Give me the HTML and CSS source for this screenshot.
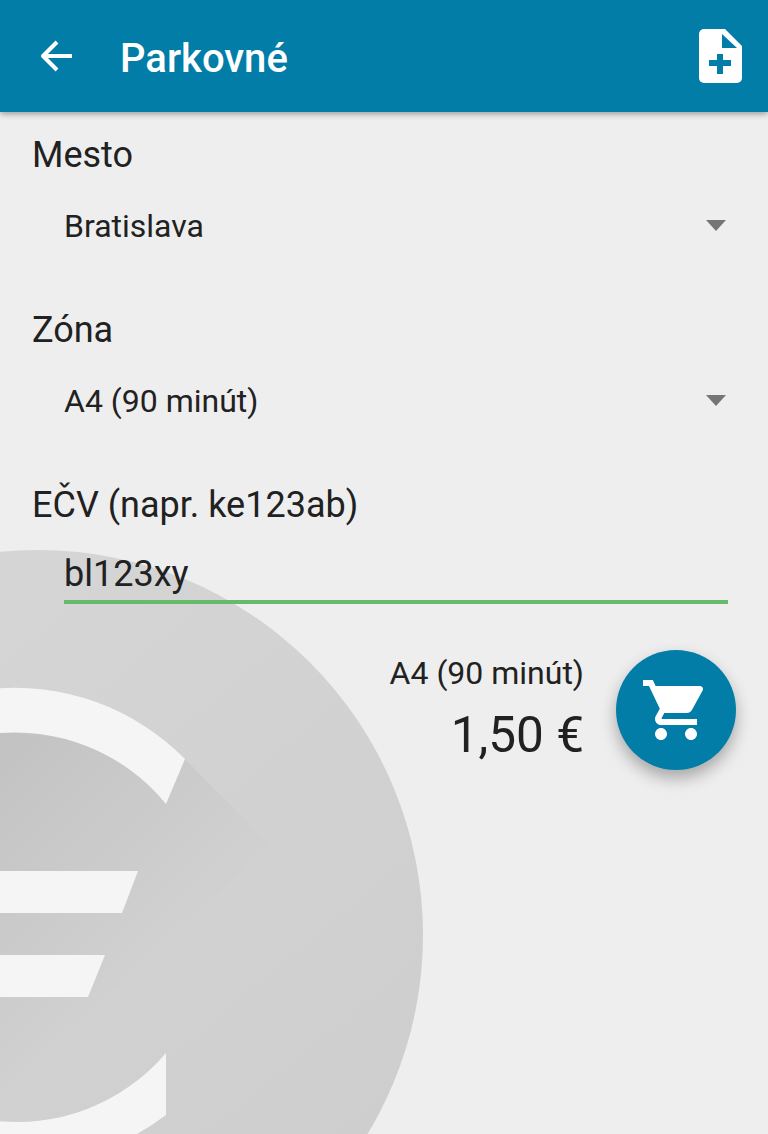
FILE: index.html
```html
<!DOCTYPE html>
<html>

<head>
	<meta charset="utf-8" />
	<title>Parkovné</title>
	<link rel="stylesheet" href="styles.css">
</head>

<body>
	<!-- euro watermark behind the form -->
	<svg class="watermark" width="768" height="1134" viewBox="0 0 768 1134">
		<defs>
			<linearGradient id="discFill" gradientUnits="userSpaceOnUse" x1="0" y1="600" x2="420" y2="1100">
				<stop offset="0" stop-color="#d5d5d5" />
				<stop offset="1" stop-color="#cecece" />
			</linearGradient>
			<linearGradient id="shadeFill" gradientUnits="userSpaceOnUse" x1="0" y1="730" x2="182" y2="912">
				<stop offset="0" stop-color="#c2c2c2" />
				<stop offset="1" stop-color="#d0d0d0" />
			</linearGradient>
			<clipPath id="discClip">
				<circle cx="38" cy="935" r="385" />
			</clipPath>
		</defs>
		<circle cx="38" cy="935" r="385" fill="url(#discFill)" />
		<polygon points="-10,710 90,720 175,770 185,759 270,845 -10,1105" fill="url(#shadeFill)" clip-path="url(#discClip)" />
		<path d="M-10 689 A240 240 0 0 1 185 759 L166 804 A195 195 0 0 0 -10 734 Z" fill="#f5f5f5" />
		<path d="M-10 871 H138 L122 913 H-10 Z" fill="#f5f5f5" />
		<path d="M-10 955 H105 L88 997 H-10 Z" fill="#f5f5f5" />
		<path d="M-10 1120 A195 195 0 0 0 166 1053 V1115 A240 240 0 0 1 137 1134 H-10 Z" fill="#f5f5f5" />
	</svg>

	<header class="toolbar">
		<button class="icon-btn back" type="button" aria-label="Späť">
			<svg width="36" height="36" viewBox="0 0 36 36">
				<path d="M33 18H4 M18 4 L4 18 L18 32" fill="none" stroke="#fff" stroke-width="4" stroke-linejoin="round" />
			</svg>
		</button>
		<h1 class="title">Parkovné</h1>
		<button class="icon-btn add-doc" type="button" aria-label="Pridať">
			<svg width="43" height="54" viewBox="0 0 43 54">
				<path d="M5 0H26L43 17V49a5 5 0 0 1-5 5H5a5 5 0 0 1-5-5V5a5 5 0 0 1 5-5Z" fill="#fff" />
				<path d="M23 5V19H38Z" fill="#027da8" />
				<path d="M18 25h6v6h8v6h-8v8h-6v-8h-8v-6h8Z" fill="#027da8" />
			</svg>
		</button>
	</header>

	<main class="form">
		<div class="field">
			<label class="field-label">Mesto</label>
			<div class="select">
				<span class="select-value">Bratislava</span>
				<i class="caret"></i>
			</div>
		</div>

		<div class="field">
			<label class="field-label">Zóna</label>
			<div class="select">
				<span class="select-value">A4 (90 minút)</span>
				<i class="caret"></i>
			</div>
		</div>

		<div class="field last">
			<label class="field-label">EČV (napr. ke123ab)</label>
			<div class="plate">bl123xy</div>
		</div>

		<div class="summary">
			<div class="price-box">
				<div class="zone-name">A4 (90 minút)</div>
				<div class="price">1,50 €</div>
			</div>
			<button class="fab" type="button" aria-label="Kúpiť">
				<svg width="72" height="72" viewBox="0 0 24 24">
					<path fill="#fff" d="M7 18c-1.100 0-1.990.9-1.990 2S5.900 22 7 22s2-.9 2-2-.9-2-2-2zM1 2v2h2l3.600 7.590-1.350 2.450c-.16.28-.25.61-.25.960 0 1.100.9 2 2 2h12v-2H7.420c-.14 0-.25-.11-.25-.25l.03-.12.9-1.630h7.450c.75 0 1.410-.41 1.750-1.030l3.580-6.490c.08-.14.12-.31.12-.48 0-.55-.45-1-1-1H5.210l-.94-2H1zm16 16c-1.100 0-1.990.9-1.990 2s.89 2 1.990 2 2-.9 2-2-.9-2-2-2z" />
				</svg>
			</button>
		</div>
	</main>
</body>

</html>
```

FILE: styles.css
```css
html,
body {
	height: 100%;
}

body {
	margin: 0;
	overflow: hidden;
	position: relative;
	background-color: #eeeeee;
	font-family: Roboto, sans-serif;
	color: #212121;
}

.watermark {
	position: absolute;
	left: 0;
	top: 0;
}

/* Top bar */
.toolbar {
	position: relative;
	display: flex;
	align-items: center;
	height: 112px;
	background-color: #027da8;
	box-shadow: 0 2px 6px rgba(0, 0, 0, 0.35);
}

.icon-btn {
	display: flex;
	padding: 0;
	border: 0;
	background: none;
}

.back {
	margin-left: 39px;
}

.title {
	flex: 1;
	margin: 4px 0 0 45px;
	font-size: 40px;
	font-weight: 500;
	color: #fff;
}

.add-doc {
	margin-right: 26px;
}

/* Form */
.form {
	position: relative;
	display: flex;
	flex-direction: column;
	padding: 21px 32px 0 32px;
}

.field {
	display: flex;
	flex-direction: column;
	height: 175px;
}

.field.last {
	height: auto;
}

.field-label {
	font-size: 36px;
	line-height: 44px;
}

.select {
	display: flex;
	align-items: center;
	justify-content: space-between;
	margin-top: 24px;
	padding: 0 10px 0 32px;
	height: 48px;
	font-size: 32px;
}

.select-value {
	margin-top: 2px;
}

.caret {
	width: 0;
	height: 0;
	border-left: 10px solid transparent;
	border-right: 10px solid transparent;
	border-top: 11px solid #757575;
}

.plate {
	margin: 21px 8px 0 32px;
	height: 52px;
	line-height: 52px;
	font-size: 36px;
	border-bottom: 4px solid #66bb6a;
}

.summary {
	display: flex;
	justify-content: flex-end;
	align-items: flex-start;
	margin-top: 46px;
}

.price-box {
	margin-top: 3px;
	margin-right: 32px;
	text-align: right;
}

.zone-name {
	font-size: 32px;
	line-height: 40px;
}

.price {
	font-size: 49.500px;
	line-height: 60px;
	margin-top: 12px;
}

.fab {
	display: flex;
	align-items: center;
	justify-content: center;
	width: 120px;
	height: 120px;
	padding: 0;
	border: 0;
	border-radius: 50%;
	background-color: #027da8;
	box-shadow: 0 8px 16px rgba(0, 0, 0, 0.3);
}
```
